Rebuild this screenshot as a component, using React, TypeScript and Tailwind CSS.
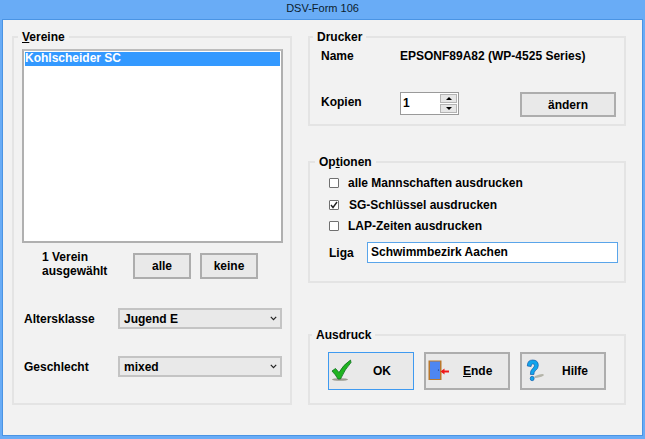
const btn = "flex items-center justify-center bg-[#e9e9e9] border-2 border-[#adadad] text-black";

function CheckIcon() {
  return (
    <svg width="22" height="24" viewBox="0 0 22 24" className="shrink-0">
      <ellipse cx="9" cy="20.5" rx="8" ry="1.3" fill="#9a9a8e" />
      <path d="M1 12 L4.5 9.5 L8 13.5 Q12 6 19.5 1 L20 3.5 Q14 10 9.5 20 L7 20 Q4.5 15.5 1 12 Z" fill="#1fb41f" stroke="#0d6f1d" strokeWidth="0.8" />
    </svg>
  );
}

function DoorIcon() {
  return (
    <svg width="22" height="22" viewBox="0 0 22 22" className="shrink-0">
      <rect x="0.5" y="0.5" width="13" height="19.5" fill="#b9782d" />
      <rect x="2" y="1.5" width="10" height="17.5" fill="#4e86f2" />
      <circle cx="10.5" cy="10" r="0.6" fill="#10306f" />
      <path d="M14 10.5 H21 V12.5 H14 Z" fill="#f01818" />
      <path d="M12.5 11.5 L16.5 8.5 V14.5 Z" fill="#f01818" />
    </svg>
  );
}

function HelpIcon() {
  return (
    <svg width="22" height="24" viewBox="0 0 22 24" className="shrink-0">
      <ellipse cx="13" cy="17" rx="5" ry="1.4" fill="#b5b5aa" transform="rotate(-15 13 17)" />
      <g transform="scale(0.88 1)">
        <path d="M1.5 7 Q1.5 1 7.5 1 Q14 1 14 6.5 Q14 9.8 10.5 11.8 Q9 12.8 9 15.5 H5 Q4.7 11.5 7.6 9.4 Q9.6 8 9.6 6.5 Q9.6 4.8 7.8 4.8 Q5.8 4.8 5.8 7.5 Z" fill="#12a5ec" stroke="#0b55a8" strokeWidth="0.7" />
        <circle cx="7" cy="19.5" r="2.2" fill="#12a5ec" stroke="#0b55a8" strokeWidth="0.7" />
      </g>
    </svg>
  );
}

function Chevron() {
  return (
    <svg width="7" height="5" viewBox="0 0 7 5" className="shrink-0">
      <path d="M0.8 0.8 L3.5 3.6 L6.2 0.8" fill="none" stroke="#222" strokeWidth="1.2" />
    </svg>
  );
}

function Group({ title, h, ml, children }: { title: React.ReactNode; h: string; ml: string; children: React.ReactNode }) {
  return (
    <div className={`border-2 border-[#e4e4e4] ${h}`}>
      <div className={`-mt-[9px] ${ml} w-fit bg-[#f2f2f2] px-[4px] h-[16px] leading-[16px]`}>{title}</div>
      {children}
    </div>
  );
}

function Select({ value }: { value: string }) {
  return (
    <div className="flex h-[21px] w-[164px] items-center justify-between bg-[#e9e9e9] border-2 border-[#c4c4c4] pl-[4px] pr-[3px]">
      <span>{value}</span>
      <Chevron />
    </div>
  );
}

function Check({ label, checked, mt, ml }: { label: string; checked?: boolean; mt: string; ml: string }) {
  return (
    <div className={`flex items-center h-[16px] ${mt}`}>
      <div className="flex items-center justify-center w-[10px] h-[10px] bg-white border border-[#707070] rounded-[1px]">
        {checked && (
          <svg width="8" height="8" viewBox="0 0 8 8">
            <path d="M1 4 L3 6.5 L7 1" fill="none" stroke="#222" strokeWidth="1.4" />
          </svg>
        )}
      </div>
      <span className={ml}>{label}</span>
    </div>
  );
}

export default function App() {
  return (
    <div className="flex h-[439px] w-[645px] flex-col bg-[#69acf6] text-[12px] font-bold text-black [font-family:'Liberation_Sans',Arial,sans-serif]">
      <div className="h-[19px] shrink-0 text-center font-normal leading-[17px] text-[11px] text-[#0c1c2e]">DSV-Form 106</div>
      <div className="mx-[2px] flex h-[417px] border border-[#4a94e4] bg-[#f2f2f2] pl-[9px] pt-[16px]">
        {/* left column */}
        <div className="w-[280px] shrink-0">
          <Group
            title={<span><span className="underline">V</span>ereine</span>}
            h="h-[369px]"
            ml="ml-[4px]"
          >
            <div className="ml-[8px] mt-[4px] h-[194px] w-[261px] border-2 border-[#b0b0b0] border-t-[#bdbdbd] bg-white pt-[1px] pl-[1px] pr-[1px]">
              <div className="h-[14px] bg-[#3399ff] leading-[13px] text-white">Kohlscheider SC</div>
            </div>
            <div className="flex">
              <div className="ml-[28px] mt-[7px] w-[91px] leading-[14px]">1 Verein<br />ausgewählt</div>
              <button className={`${btn} mt-[10px] h-[26px] w-[58px]`}>alle</button>
              <button className={`${btn} ml-[9px] mt-[10px] h-[26px] w-[58px]`}>keine</button>
            </div>
            <div className="ml-[10px] mt-[29px] flex items-center">
              <span className="w-[94px]">Altersklasse</span>
              <Select value="Jugend E" />
            </div>
            <div className="ml-[10px] mt-[27px] flex items-center">
              <span className="w-[94px]">Geschlecht</span>
              <Select value="mixed" />
            </div>
          </Group>
        </div>

        {/* right column */}
        <div className="ml-[16px] w-[318px] shrink-0">
          <Group title={<span>Drucker</span>} h="h-[90px]" ml="ml-[3px]">
            <div className="ml-[11px] mt-[3px] flex h-[16px] items-center">
              <span className="w-[79px]">Name</span>
              <span>EPSONF89A82 (WP-4525 Series)</span>
            </div>
            <div className="ml-[11px] mt-[25px] flex items-center">
              <span className="w-[79px] -mt-[3px]">Kopien</span>
              <div className="flex h-[23px] w-[59px] items-center justify-between border border-[#9a9a9a] bg-white pl-[2px] pr-[1px]">
                <span>1</span>
                <div className="flex flex-col gap-px">
                  <div className="flex h-[9px] w-[17px] items-center justify-center bg-[#e6e6e6] border border-[#b4b4b4]">
                    <div className="h-0 w-0 border-x-[3px] border-b-[3px] border-x-transparent border-b-black" />
                  </div>
                  <div className="flex h-[9px] w-[17px] items-center justify-center bg-[#e6e6e6] border border-[#b4b4b4]">
                    <div className="h-0 w-0 border-x-[3px] border-t-[3px] border-x-transparent border-t-black" />
                  </div>
                </div>
              </div>
              <button className={`${btn} ml-[61px] mt-[3px] h-[25px] w-[96px]`}>ändern</button>
            </div>
          </Group>

          <div className="mt-[35px]">
            <Group title={<span>Op<span className="underline">t</span>ionen</span>} h="h-[122px]" ml="ml-[5px]">
              <div className="ml-[19px] pt-[5px]">
                <Check label="alle Mannschaften ausdrucken" mt="mt-0" ml="ml-[9px]" />
                <Check label="SG-Schlüssel ausdrucken" checked mt="mt-[6px]" ml="ml-[10px]" />
                <Check label="LAP-Zeiten ausdrucken" mt="mt-[5px]" ml="ml-[9px]" />
                <div className="mt-[8px] flex items-center">
                  <span className="w-[38px]">Liga</span>
                  <div className="flex h-[21px] w-[251px] items-center border border-[#5aa5ea] bg-white pl-[3px] pb-[2px]">Schwimmbezirk Aachen</div>
                </div>
              </div>
            </Group>
          </div>

          <div className="mt-[51px]">
            <Group title={<span>Ausdruck</span>} h="h-[71px]" ml="ml-[2px]">
              <div className="ml-[18px] mt-[9px] flex gap-[10px]">
                <button className="flex h-[38px] w-[86px] items-center bg-[#e9e9e9] border border-[#3f9af0] pl-[2px]">
                  <CheckIcon />
                  <span className="ml-[20px]">OK</span>
                </button>
                <button className={`${btn} !justify-start h-[38px] w-[86px] pl-[2px]`}>
                  <DoorIcon />
                  <span className="ml-[13px]"><span className="underline">E</span>nde</span>
                </button>
                <button className={`${btn} !justify-start h-[38px] w-[86px] pl-[4px]`}>
                  <HelpIcon />
                  <span className="ml-[14px]">Hilfe</span>
                </button>
              </div>
            </Group>
          </div>
        </div>
      </div>
    </div>
  );
}
